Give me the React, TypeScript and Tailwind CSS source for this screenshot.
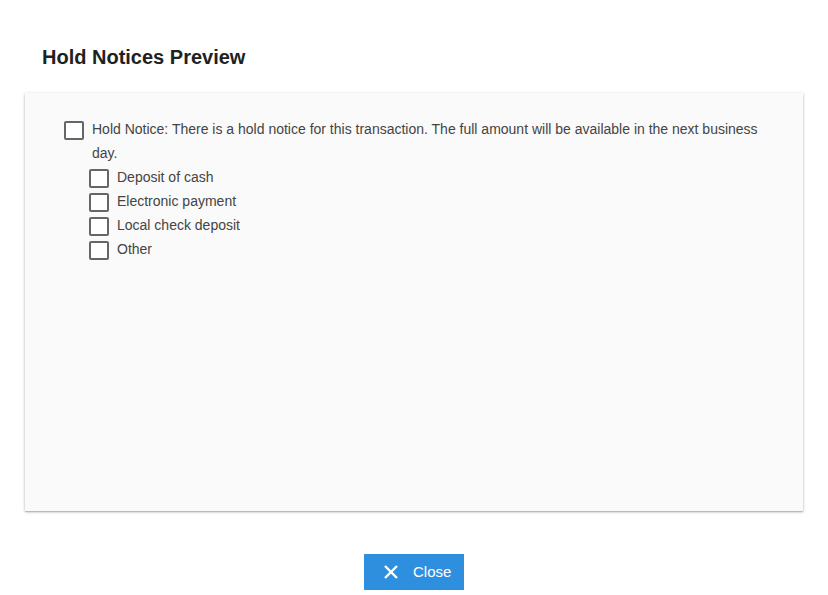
function Box() {
  return <span className="inline-block w-[20px] h-[19px] border-2 border-[#666] rounded-[2px] bg-white shrink-0" />;
}

const options = ['Deposit of cash', 'Electronic payment', 'Local check deposit', 'Other'];

export default function App() {
  return (
    <div className="w-[828px] h-[595px] bg-white flex flex-col text-[#333]" style={{ fontFamily: '"Liberation Sans", Arial, sans-serif' }}>
      {/* 标题 */}
      <h2 className="pl-[42px] pt-[44px] h-[93px] text-[20px] font-bold text-[#212121] leading-[26px]">Hold Notices Preview</h2>

      {/* 内容面板 */}
      <div className="mx-[25px] h-[418px] bg-[#fafafa] shadow-[0_1px_3px_rgba(0,0,0,0.25),0_1px_1px_rgba(0,0,0,0.14)] pl-[39px] pr-[40px] pt-[24px]">
        <div className="flex items-start gap-[8px]">
          <span className="mt-[4px]"><Box /></span>
          <p className="text-[14px] leading-[24px] text-[#444]">
            Hold Notice: There is a hold notice for this transaction. The full amount will be available in the next business day.
          </p>
        </div>
        <div className="pl-[25px] flex flex-col">
          {options.map((o) => (
            <label key={o} className="flex items-start gap-[8px] h-[24px] text-[14px] text-[#444]">
              <span className="mt-[4px]"><Box /></span>
              <span className="leading-[24px]">{o}</span>
            </label>
          ))}
        </div>
      </div>

      {/* 按钮 */}
      <div className="flex justify-center pt-[43px]">
        <button className="w-[100px] h-[36px] bg-[#2f8fdf] text-white text-[15px] flex items-center justify-start pl-[19px] gap-[14px]">
          <svg width="16" height="16" viewBox="0 0 16 16" stroke="white" strokeWidth="2.4" fill="none">
            <path d="M2 2 L14 14 M14 2 L2 14" />
          </svg>
          <span>Close</span>
        </button>
      </div>
    </div>
  );
}
